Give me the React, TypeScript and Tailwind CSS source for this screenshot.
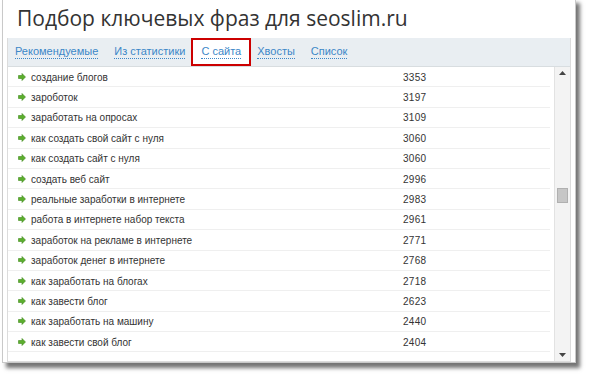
import React from "react";

const tabs = ["Рекомендуемые", "Из статистики", "С сайта", "Хвосты", "Список"];

const rows: [string, number][] = [
  ["создание блогов", 3353],
  ["зароботок", 3197],
  ["заработать на опросах", 3109],
  ["как создать свой сайт с нуля", 3060],
  ["как создать сайт с нуля", 3060],
  ["создать веб сайт", 2996],
  ["реальные заработки в интернете", 2983],
  ["работа в интернете набор текста", 2961],
  ["заработок на рекламе в интернете", 2771],
  ["заработок денег в интернете", 2768],
  ["как заработать на блогах", 2718],
  ["как завести блог", 2623],
  ["как заработать на машину", 2440],
  ["как завести свой блог", 2404],
];

function Arrow() {
  return (
    <svg width="8" height="8" viewBox="0 0 8 8" className="shrink-0">
      <path d="M0.5 2.5 H4 V0.5 L7.5 4 L4 7.5 V5.5 H0.5 Z" fill="#5cae2e" stroke="#3f8a1c" strokeWidth="0.6" />
    </svg>
  );
}

export default function App() {
  return (
    <div className="w-[590px] h-[378px] bg-white relative overflow-hidden">
      <div className="absolute left-[2px] top-[-2px] w-[574px] h-[365px] bg-white border border-[#c9c9c9] shadow-[4px_5px_4px_rgba(0,0,0,0.55)] flex flex-col">
        <div
          className="h-[39px] pl-[14px] pt-[4px] text-[21px] text-[#333] leading-[30px]"
          style={{ fontFamily: '"Open Sans", sans-serif' }}
        >
          Подбор ключевых фраз для seoslim.ru
        </div>
        <div className="mx-[4px] flex flex-col flex-1 border border-[#dcdcdc] border-t-0">
          <div
            className="h-[28px] bg-[#e9eef2] flex items-center pl-[7px] gap-[16px] text-[11px] text-[#3c87c8]"
            style={{ fontFamily: '"Liberation Sans", sans-serif' }}
          >
            {tabs.map((t, i) => (
              <div
                key={t}
                className={
                  i === 2
                    ? "h-[28px] flex items-center px-[8px] -mx-[10px] border-2 border-[#cc0000] bg-white"
                    : "flex items-center"
                }
              >
                <span className="border-b border-dotted border-[#3c87c8] leading-[13px]">{t}</span>
              </div>
            ))}
          </div>
          <div className="flex flex-1 border-t border-[#d8dde0]">
            <div
              className="flex-1 pr-[4px] text-[10px] text-[#333]"
              style={{ fontFamily: '"Liberation Sans", sans-serif' }}
            >
              {rows.map(([q, n]) => (
                <div key={q} className="h-[20.4px] flex items-center border-b border-[#efefef]">
                  <div className="w-[23px] pl-[10px] flex items-center">
                    <Arrow />
                  </div>
                  <div className="w-[372px] pt-[1px]">{q}</div>
                  <div className="pt-[1px] tracking-[0.3px]">{n}</div>
                </div>
              ))}
            </div>
            <div className="w-[16px] bg-[#f3f3f3] border-l border-[#e2e2e2] flex flex-col items-center justify-between py-[4px]">
              <svg width="7" height="4" viewBox="0 0 7 4"><path d="M0 4 L3.5 0 L7 4 Z" fill="#444" /></svg>
              <div className="flex-1 w-full flex flex-col items-center pt-[113px]">
                <div className="w-[11px] h-[15px] bg-[#c6c6c6] border border-[#b0b0b0]" />
              </div>
              <svg width="7" height="4" viewBox="0 0 7 4"><path d="M0 0 L3.5 4 L7 0 Z" fill="#444" /></svg>
            </div>
          </div>
        </div>
      </div>
    </div>
  );
}
